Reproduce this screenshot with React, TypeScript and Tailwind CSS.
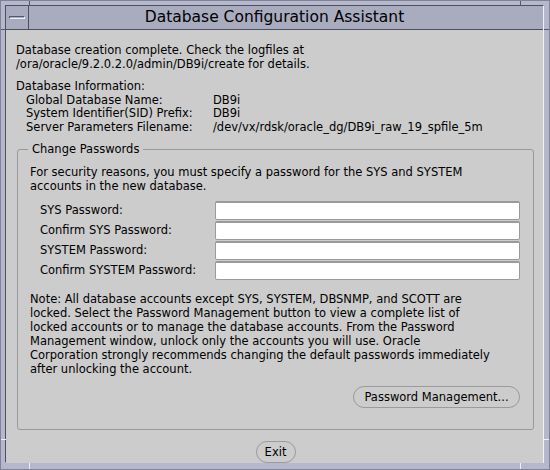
import React from "react";

const FONT = { fontFamily: '"DejaVu Sans", "Liberation Sans", sans-serif' };

function PwField({ label }: { label: string }) {
  return (
    <div className="flex h-[20px] items-center">
      <div className="w-[185px] pl-[10px]">{label}</div>
      <div className="h-[19px] w-[305px] rounded-[2px] border border-[#9a9a9a] border-t-[2px] bg-white" />
    </div>
  );
}

function PillButton({ children, className }: { children: React.ReactNode; className?: string }) {
  return (
    <button
      className={
        "flex h-[22px] items-center justify-center rounded-full border border-[#9b9b9b] bg-[#cccccc] text-black " +
        (className ?? "")
      }
    >
      {children}
    </button>
  );
}

export default function App() {
  return (
    <div
      className="relative h-[470px] w-[550px] border border-[#80829a] bg-[#b5b7ca] pb-[6px] pl-[4px] pr-[5px] pt-[4px]"
      style={FONT}
    >
      {/* frame resize ticks */}
      <div className="absolute left-[28px] top-0 h-[5px] w-px bg-[#55576a]" />
      <div className="absolute left-[519px] top-0 h-[5px] w-px bg-[#55576a]" />
      <div className="absolute left-[28px] bottom-0 h-[6px] w-px bg-[#f0f0f6]" />
      <div className="absolute left-[519px] bottom-0 h-[6px] w-px bg-[#f0f0f6]" />
      <div className="absolute left-0 top-[28px] h-px w-[5px] bg-[#55576a]" />
      <div className="absolute right-0 top-[28px] h-px w-[5px] bg-[#55576a]" />
      <div className="absolute left-0 top-[438px] h-px w-[5px] bg-[#f0f0f6]" />
      <div className="absolute right-0 top-[438px] h-px w-[5px] bg-[#f0f0f6]" />

      <div className="flex h-full flex-col border border-[#4e5060] border-b-[#f0f0f6] border-r-[#f0f0f6]">
        {/* title bar */}
        <div className="flex h-[24px] border-b border-[#4e5060] bg-[#a9acbf]">
          <div className="flex w-[23px] items-center justify-center border-r border-[#4e5060]">
            <div className="h-[3px] w-[16px] border border-[#55576a] border-b-[#f0f0f6] border-r-[#f0f0f6] bg-[#a9acbf]" />
          </div>
          <div className="flex flex-1 items-center justify-center pr-[23px] text-[15.5px] text-black">
            Database Configuration Assistant
          </div>
        </div>

        {/* content */}
        <div className="flex flex-1 flex-col bg-[#cccccc] px-[10px] pt-[13px] text-[11.5px] leading-[14px] text-black">
          <p>
            Database creation complete. Check the logfiles at
            <br />
            /ora/oracle/9.2.0.2.0/admin/DB9i/create for details.
          </p>

          <div className="mt-[9px] leading-[13.5px]">
            <p>Database Information:</p>
            <div className="grid grid-cols-[187px_1fr] pl-[10px]">
              <span>Global Database Name:</span>
              <span>DB9i</span>
              <span>System Identifier(SID) Prefix:</span>
              <span>DB9i</span>
              <span>Server Parameters Filename:</span>
              <span>/dev/vx/rdsk/oracle_dg/DB9i_raw_19_spfile_5m</span>
            </div>
          </div>

          {/* group box */}
          <div className="relative mt-[15px] ml-[1px] mr-[-1px] rounded-[3px] border border-[#999999] px-[12px] pb-[21px] pt-[15px]">
            <span className="absolute left-[10px] top-[-8px] bg-[#cccccc] px-[4px] leading-[14px]">
              Change Passwords
            </span>
            <p>
              For security reasons, you must specify a password for the SYS and SYSTEM
              <br />
              accounts in the new database.
            </p>
            <div className="mt-[7px] flex flex-col">
              <PwField label="SYS Password:" />
              <PwField label="Confirm SYS Password:" />
              <PwField label="SYSTEM Password:" />
              <PwField label="Confirm SYSTEM Password:" />
            </div>
            <p className="mt-[12px]">
              Note: All database accounts except SYS, SYSTEM, DBSNMP, and SCOTT are
              <br />
              locked. Select the Password Management button to view a complete list of
              <br />
              locked accounts or to manage the database accounts. From the Password
              <br />
              Management window, unlock only the accounts you will use. Oracle
              <br />
              Corporation strongly recommends changing the default passwords immediately
              <br />
              after unlocking the account.
            </p>
            <div className="mt-[10px] flex justify-end pr-[1px]">
              <PillButton className="w-[167px]">Password Management...</PillButton>
            </div>
          </div>

          <div className="mt-[11px] flex justify-center pl-[2px]">
            <PillButton className="w-[40px]">Exit</PillButton>
          </div>
        </div>
      </div>
    </div>
  );
}
